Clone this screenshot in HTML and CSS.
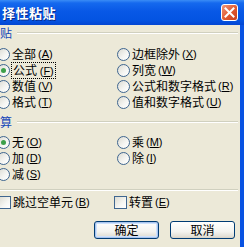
FILE: index.html
```html
<!DOCTYPE html>
<html lang="zh-CN">

<head>
  <meta charset="UTF-8">
  <meta name="viewport" content="width=device-width, initial-scale=1.0">
  <title>择性粘贴</title>
  <link rel="stylesheet" href="styles.css">
</head>

<body>
  <div class="window">
    <div class="titlebar">
      <span class="title">择性粘贴</span>
      <span class="close">
        <svg width="11" height="11" viewBox="0 0 11 11">
          <path d="M1.5 1.5 L9.5 9.5 M9.5 1.5 L1.5 9.5" stroke="#fff" stroke-width="2" stroke-linecap="square" />
        </svg>
      </span>
    </div>

    <div class="content">
      <div class="heading">贴</div>
      <div class="options first">
        <label class="opt"><span class="radio"></span>全部 <span class="key">(<u>A</u>)</span></label>
        <label class="opt"><span class="radio"></span>边框除外 <span class="key">(<u>X</u>)</span></label>
        <label class="opt"><span class="radio on"></span><span class="focus">公式 <span class="key">(<u>F</u>)</span></span></label>
        <label class="opt"><span class="radio"></span>列宽 <span class="key">(<u>W</u>)</span></label>
        <label class="opt"><span class="radio"></span>数值 <span class="key">(<u>V</u>)</span></label>
        <label class="opt"><span class="radio"></span>公式和数字格式 <span class="key">(<u>R</u>)</span></label>
        <label class="opt"><span class="radio"></span>格式 <span class="key">(<u>T</u>)</span></label>
        <label class="opt"><span class="radio"></span>值和数字格式 <span class="key">(<u>U</u>)</span></label>
      </div>

      <div class="heading calc">算</div>
      <div class="options">
        <label class="opt"><span class="radio on"></span>无 <span class="key">(<u>O</u>)</span></label>
        <label class="opt"><span class="radio"></span>乘 <span class="key">(<u>M</u>)</span></label>
        <label class="opt"><span class="radio"></span>加 <span class="key">(<u>D</u>)</span></label>
        <label class="opt"><span class="radio"></span>除 <span class="key">(<u>I</u>)</span></label>
        <label class="opt"><span class="radio"></span>减 <span class="key">(<u>S</u>)</span></label>
      </div>

      <div class="rule"></div>

      <div class="checks">
        <label class="opt"><span class="box"></span>跳过空单元 <span class="key">(<u>B</u>)</span></label>
        <label class="opt"><span class="box"></span>转置 <span class="key">(<u>E</u>)</span></label>
      </div>

      <div class="actions">
        <button class="btn default">确定</button>
        <button class="btn">取消</button>
      </div>
    </div>
  </div>
</body>

</html>
```

FILE: styles.css
```css
html,
body {
  margin: 0;
  padding: 0;
}

body {
  font-family: "Noto Sans CJK SC", sans-serif;
  font-size: 12px;
  color: #000;
  background: #ECE9D8;
}

.window {
  width: 244px;
  height: 247px;
  display: flex;
  flex-direction: column;
  overflow: hidden;
  background: #0852E2;
}

/* XP title bar */
.titlebar {
  flex: none;
  height: 25px;
  display: flex;
  align-items: center;
  justify-content: space-between;
  padding: 0 6px 0 2px;
  background: linear-gradient(#3A8CF6 0, #1569EE 12%, #0858E6 45%, #0454E2 80%, #0346D2 100%);
}

.title {
  color: #fff;
  font-weight: bold;
  font-size: 13px;
  letter-spacing: 0.5px;
  text-shadow: 1px 1px #0A2C8A;
}

.close {
  width: 17px;
  height: 17px;
  box-sizing: border-box;
  border: 1px solid #fff;
  border-radius: 3px;
  display: flex;
  align-items: center;
  justify-content: center;
  background: linear-gradient(135deg, #F0967A, #E0582F 55%, #C8401E);
}

.content {
  flex: 1;
  margin-right: 4px;
  padding-top: 1px;
  background: #ECE9D8;
}

/* section label with etched line */
.heading {
  display: flex;
  align-items: center;
  height: 14px;
  line-height: 14px;
  color: #1346B8;
  white-space: nowrap;
}

.heading::after {
  content: "";
  flex: 1;
  border-top: 1px solid #D0D0BF;
  border-bottom: 1px solid #fff;
  margin: 0 2px 0 5px;
}

.calc {
  margin-top: 5px;
}

.options {
  display: grid;
  grid-template-columns: 120px 1fr;
  grid-auto-rows: 16px;
  margin-left: -3px;
  margin-top: 5px;
}

.options.first {
  margin-top: 6px;
}

.opt {
  display: flex;
  align-items: center;
  gap: 2px;
  white-space: nowrap;
  line-height: 14px;
}

.key {
  font-family: "Liberation Sans", sans-serif;
  font-size: 11px;
}

.focus {
  outline: 1px dotted #000;
  outline-offset: 0;
  padding: 0 1px;
}

.radio {
  flex: none;
  position: relative;
  width: 13px;
  height: 13px;
  box-sizing: border-box;
  border: 1px solid #3F6690;
  border-radius: 50%;
  background: linear-gradient(135deg, #DCDBD2, #F6F6F3 60%, #fff);
}

.radio.on::after {
  content: "";
  position: absolute;
  left: 3px;
  top: 3px;
  width: 5px;
  height: 5px;
  border-radius: 50%;
  background: #3DA04A;
}

.rule {
  height: 0;
  border-top: 1px solid #D0D0BF;
  border-bottom: 1px solid #fff;
  margin: 7px 2px 0 0;
}

.checks {
  display: grid;
  grid-template-columns: 116px 1fr;
  grid-auto-rows: 16px;
  margin: 3px 0 0 -2px;
}

.box {
  flex: none;
  width: 13px;
  height: 13px;
  box-sizing: border-box;
  border: 1px solid #3F6690;
  background: linear-gradient(135deg, #DCDBD2, #F6F6F3 60%, #fff);
}

.actions {
  display: flex;
  justify-content: flex-end;
  gap: 11px;
  padding-right: 5px;
  margin-top: 11px;
}

.btn {
  width: 65px;
  height: 18px;
  padding: 0;
  border: 1px solid #003C74;
  border-radius: 3px;
  font-family: "Noto Sans CJK SC", sans-serif;
  font-size: 12px;
  line-height: 14px;
  color: #000;
  background: linear-gradient(#FFFFFF, #F3F3EF 60%, #E2DFD6 90%, #D6D0C5);
}

.btn.default {
  box-shadow: inset 0 0 0 1px #A9C4EE, inset 0 0 0 2px #CEE2FC;
}
```
